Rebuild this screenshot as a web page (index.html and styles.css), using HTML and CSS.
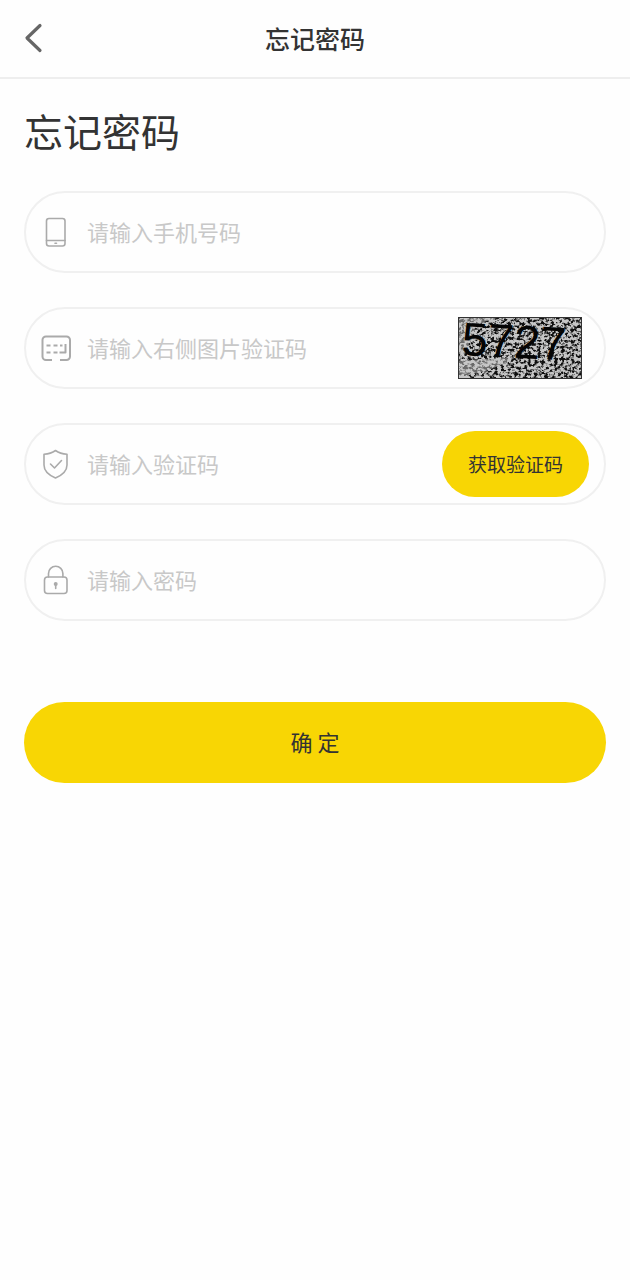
FILE: index.html
```html
<!DOCTYPE html>
<html lang="zh-CN">
<head>
<meta charset="utf-8">
<meta name="viewport" content="width=device-width, initial-scale=1">
<title>忘记密码</title>
<link rel="stylesheet" href="styles.css">
</head>
<body>
<header class="navbar">
  <button class="back" type="button" aria-label="返回">
    <svg width="20" height="30" viewBox="0 0 20 30"><path d="M16 2.500 3 15l13 12.500" fill="none" stroke="currentColor" stroke-width="3.200" stroke-linecap="round" stroke-linejoin="round"/></svg>
  </button>
  <h2 class="navbar-title">忘记密码</h2>
</header>
<main class="page">
  <h1 class="heading">忘记密码</h1>
  <form class="form">
    <div class="field">
      <svg class="icon" viewBox="0 0 32 32"><rect x="6.500" y="2.500" width="18.500" height="27.500" rx="2.500"/><path d="M6.500 24.500H25M15 27.300h1.500"/></svg>
      <input class="input" type="tel" aria-label="手机号码" placeholder="请输入手机号码">
    </div>
    <div class="field">
      <svg class="icon icon-bold" viewBox="0 0 32 32"><path d="M12 28H6a3.500 3.500 0 0 1-3.500-3.500V8A3.500 3.500 0 0 1 6 4.500h20.500A3.500 3.500 0 0 1 30 8v16.500a3.500 3.500 0 0 1-3.500 3.500h-6.500M6.500 13.500h4M13.500 13.500h4M20 13.500h2.500M6.500 20.500h4M13.500 20.500h4M19.500 20.500h6v-8.500"/></svg>
      <input class="input" type="text" aria-label="图片验证码" placeholder="请输入右侧图片验证码">
      <button class="captcha" type="button" aria-label="刷新图片验证码">
        <svg class="captcha-image" width="124" height="62" viewBox="0 0 124 62">
          <defs>
            <filter id="grain" x="0" y="0" width="100%" height="100%" color-interpolation-filters="sRGB">
              <feTurbulence type="fractalNoise" baseFrequency="0.300 0.340" numOctaves="3" seed="11"/>
              <feColorMatrix values="0 0 0 0 0.060  0 0 0 0 0.060  0 0 0 0 0.060  5 0 0 0 -2.200"/>
            </filter>
          </defs>
          <rect width="124" height="62" fill="#c6c6c6"/>
          <rect width="124" height="62" filter="url(#grain)"/>
          <path d="M1 44 22 42 58 40 46 47 28 54 1 60zM1 1h38l-20 6-12 30H1z" fill="#c6c6c6" opacity=".5"/>
          <rect x=".5" y=".5" width="123" height="61" fill="none" stroke="#333"/>
          <text class="captcha-digits" x="3" y="38" transform="rotate(3 3 38)">5727</text>
        </svg>
      </button>
    </div>
    <div class="field">
      <svg class="icon" viewBox="0 0 32 32"><path d="M15.500 2.500c3.500 2.500 7 3.500 11.500 3.800V17c0 6-4.500 10-11.500 13C8.500 27 4 23 4 17V6.300C8.500 6 12 5 15.500 2.500zM10.500 16l4 4 7-7.500"/></svg>
      <input class="input" type="text" aria-label="验证码" placeholder="请输入验证码">
      <button class="send" type="button">获取验证码</button>
    </div>
    <div class="field">
      <svg class="icon" viewBox="0 0 32 32"><rect x="4.500" y="13" width="22.500" height="16.500" rx="3"/><path d="M8.500 13V9.500a7.200 7.200 0 0 1 14.400 0V13M15.700 19.500v5"/><circle cx="15.700" cy="20" r="1.200"/></svg>
      <input class="input" type="password" aria-label="密码" placeholder="请输入密码">
    </div>
    <button class="submit" type="submit">确 定</button>
  </form>
</main>
</body>
</html>
```
FILE: styles.css
```css
* {
  box-sizing: border-box;
}

body {
  margin: 0;
  background: #fefefe;
  color: #333;
  font-family: "Noto Sans CJK SC", sans-serif;
}

button {
  padding: 0;
  border: 0;
  background: none;
  color: inherit;
  font-family: inherit;
  cursor: pointer;
}

svg {
  display: block;
}

.navbar {
  display: grid;
  grid-template-columns: 48px 1fr 48px;
  align-items: center;
  height: 79px;
  padding-bottom: 2px;
  border-bottom: 2px solid #eee;
}

.back {
  display: flex;
  padding-left: 24px;
  color: #666;
}

.navbar-title {
  margin: 0;
  font-size: 25px;
  font-weight: 500;
  line-height: 36px;
  text-align: center;
}

.page {
  padding: 23px 24px;
}

.heading {
  margin: 0 0 32px;
  font-size: 39px;
  font-weight: 400;
  line-height: 57px;
}

.form {
  display: flex;
  flex-direction: column;
  gap: 34px;
}

.field {
  display: flex;
  align-items: center;
  height: 82px;
  padding: 0 15px 0 14px;
  border: 2px solid #f0f0f0;
  border-radius: 41px;
}

.icon {
  flex: none;
  width: 32px;
  height: 32px;
  fill: none;
  stroke: #aaa;
  stroke-width: 1.6;
  stroke-linecap: round;
  stroke-linejoin: round;
}

.icon-bold {
  stroke-width: 2;
  stroke-linecap: butt;
}

.input {
  flex: 1;
  min-width: 0;
  height: 48px;
  margin-left: 15px;
  padding: 0 0 2px;
  border: 0;
  outline: 0;
  background: none;
  color: #333;
  font-family: inherit;
  font-size: 22px;
}

.input::placeholder {
  color: #c8c8c8;
  opacity: 1;
}

.captcha {
  flex: none;
  margin-right: 7px;
}

.captcha-image {
  overflow: visible;
}

.captcha-digits {
  fill: #050505;
  font-family: "Liberation Sans", sans-serif;
  font-size: 47px;
}

.send {
  flex: none;
  height: 66px;
  padding: 0 26px 2px;
  border-radius: 33px;
  background: #f8d604;
  font-size: 19px;
}

.submit {
  height: 81px;
  margin-top: 47px;
  padding-bottom: 3px;
  border-radius: 41px;
  background: #f8d604;
  font-size: 22px;
}
```
